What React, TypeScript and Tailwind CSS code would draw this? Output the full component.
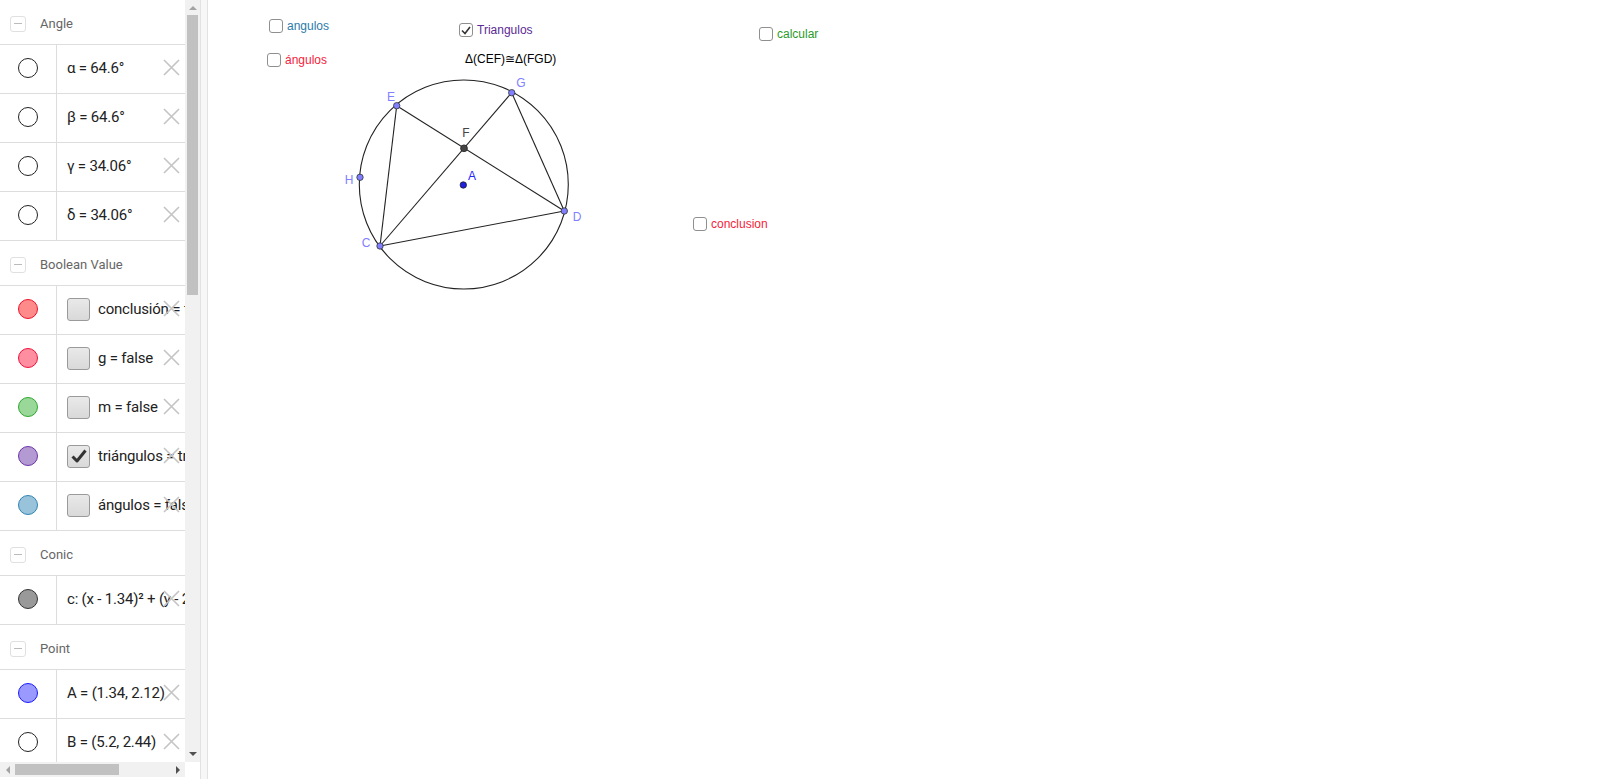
import React from 'react';

type Item = {
	fill: string;
	border: string;
	text: string;
	checkbox?: 'on' | 'off';
};

type Group = { title: string; items: Item[] };

const groups: Group[] = [
	{
		title: 'Angle',
		items: [
			{ fill: 'bg-white', border: 'border-[#222]', text: 'α = 64.6°' },
			{ fill: 'bg-white', border: 'border-[#222]', text: 'β = 64.6°' },
			{ fill: 'bg-white', border: 'border-[#222]', text: 'γ = 34.06°' },
			{ fill: 'bg-white', border: 'border-[#222]', text: 'δ = 34.06°' },
		],
	},
	{
		title: 'Boolean Value',
		items: [
			{ fill: 'bg-[#ff8a8a]', border: 'border-[#f0102a]', text: 'conclusión = false', checkbox: 'off' },
			{ fill: 'bg-[#ff8fa0]', border: 'border-[#f0103a]', text: 'g = false', checkbox: 'off' },
			{ fill: 'bg-[#99d899]', border: 'border-[#2fa82f]', text: 'm = false', checkbox: 'off' },
			{ fill: 'bg-[#b49ad2]', border: 'border-[#6a35a8]', text: 'triángulos = true', checkbox: 'on' },
			{ fill: 'bg-[#99c3da]', border: 'border-[#3184b4]', text: 'ángulos = false', checkbox: 'off' },
		],
	},
	{
		title: 'Conic',
		items: [{ fill: 'bg-[#999999]', border: 'border-[#333]', text: 'c: (x - 1.34)² + (y - 2.12)² = 15.36' }],
	},
	{
		title: 'Point',
		items: [
			{ fill: 'bg-[#9999ff]', border: 'border-[#1a1aff]', text: 'A = (1.34, 2.12)' },
			{ fill: 'bg-white', border: 'border-[#222]', text: 'B = (5.2, 2.44)' },
		],
	},
];

function CloseIcon() {
	return (
		<svg width="17" height="17" viewBox="0 0 17 17" className="absolute left-[163px] top-[14px]">
			<path d="M1 1 L16 16 M16 1 L1 16" stroke="#c4c4c4" strokeWidth="1.6" fill="none" />
		</svg>
	);
}

function ItemRow({ item }: { item: Item }) {
	return (
		<div className="relative flex h-[49px] border-b border-[#dddddd]">
			<div className="flex w-[57px] shrink-0 items-center justify-center border-r border-[#dddddd] pb-[2px]">
				<div className={`h-[20px] w-[20px] rounded-full border ${item.fill} ${item.border}`} />
			</div>
			<div className="flex min-w-0 flex-1 items-center overflow-hidden whitespace-nowrap pb-[2px] pl-[10px] text-[15px] tracking-[-0.2px] text-[#222]">
				{item.checkbox && (
					<div className="mr-[8px] flex h-[23px] w-[23px] shrink-0 items-center justify-center rounded-[3px] border border-[#9a9a9a] bg-gradient-to-b from-[#e9e9e9] to-[#d9d9d9]">
						{item.checkbox === 'on' && (
							<svg width="16" height="14" viewBox="0 0 16 14">
								<path d="M1.5 7.5 L6 12 L14.5 1.5" stroke="#333" strokeWidth="3" fill="none" strokeLinejoin="round" />
							</svg>
						)}
					</div>
				)}
				<span>{item.text}</span>
			</div>
			<CloseIcon />
		</div>
	);
}

function GroupHeader({ title }: { title: string }) {
	return (
		<div className="flex h-[45px] items-center border-b border-[#dddddd] pl-[10px] pt-[3px]">
			<div className="flex h-[16px] w-[16px] items-center justify-center rounded-[3px] border border-[#e0e0e0]">
				<div className="h-px w-[8px] bg-[#bbbbbb]" />
			</div>
			<span className="ml-[14px] text-[13px] text-[#666]">{title}</span>
		</div>
	);
}

function CanvasCheck({
	left,
	top,
	label,
	color,
	checked,
}: {
	left: number;
	top: number;
	label: string;
	color: string;
	checked?: boolean;
}) {
	return (
		<div className="absolute flex items-center gap-[4px]" style={{ left, top }}>
			<div className="flex h-[14px] w-[14px] items-center justify-center rounded-[3px] border-[1.5px] border-[#8f8f8f] bg-white">
				{checked && (
					<svg width="10" height="9" viewBox="0 0 10 9">
						<path d="M1 4.5 L4 7.5 L9 1" stroke="#333" strokeWidth="1.6" fill="none" />
					</svg>
				)}
			</div>
			<span className={`text-[12px] leading-[14px] ${color}`}>{label}</span>
		</div>
	);
}

const pts = {
	E: [396.7, 105.7],
	G: [511.7, 92.7],
	F: [464, 148.3],
	A: [463.3, 185],
	H: [360, 177.3],
	D: [564.3, 211],
	C: [380, 246],
};

function Figure() {
	const { E, G, F, A, H, D, C } = pts;
	const line = (p: number[], q: number[]) => (
		<line x1={p[0]} y1={p[1]} x2={q[0]} y2={q[1]} stroke="#222" strokeWidth="1.1" />
	);
	const labels: [string, number, number, string][] = [
		['E', 391, 101, '#8080ff'],
		['G', 521, 87, '#8080ff'],
		['F', 466, 137, '#444444'],
		['A', 472, 180, '#2424ff'],
		['H', 349, 184, '#8080ff'],
		['D', 577, 221, '#8080ff'],
		['C', 366, 247, '#8080ff'],
	];
	return (
		<svg className="absolute left-0 top-0" width="1408" height="779" viewBox="208 0 1408 779">
			<circle cx="463.8" cy="184.5" r="104.5" fill="none" stroke="#222" strokeWidth="1.1" />
			{line(E, D)}
			{line(C, G)}
			{line(C, E)}
			{line(C, D)}
			{line(G, D)}
			{[E, G, H, D, C].map((p, i) => (
				<circle key={i} cx={p[0]} cy={p[1]} r="3.2" fill="#7f7fff" stroke="#333" strokeWidth="0.8" />
			))}
			<circle cx={F[0]} cy={F[1]} r="3.4" fill="#444" stroke="#222" strokeWidth="0.8" />
			<circle cx={A[0]} cy={A[1]} r="3.2" fill="#2020e0" stroke="#222" strokeWidth="0.8" />
			{labels.map(([t, x, y, c]) => (
				<text key={t} x={x} y={y} fill={c} fontSize="12" textAnchor="middle" fontFamily="'Liberation Sans', Arial, sans-serif">
					{t}
				</text>
			))}
		</svg>
	);
}

export default function App() {
	return (
		<div className="flex h-[779px] w-[1616px] overflow-hidden bg-white font-['Roboto',sans-serif]">
			{/* Algebra view */}
			<div className="flex h-full w-[200px] shrink-0 flex-col">
				<div className="flex h-[762px]">
					<div className="w-[185px] overflow-hidden">
						{groups.map((g) => (
							<div key={g.title}>
								<GroupHeader title={g.title} />
								{g.items.map((it, i) => (
									<ItemRow key={i} item={it} />
								))}
							</div>
						))}
					</div>
					<div className="flex w-[15px] flex-col items-center bg-[#f1f1f1]">
						<div className="flex h-[15px] items-center justify-center">
							<div className="h-0 w-0 border-x-[4px] border-b-[4px] border-x-transparent border-b-[#a3a3a3]" />
						</div>
						<div className="h-[280px] w-[11px] bg-[#c1c1c1]" />
						<div className="flex-1" />
						<div className="flex h-[16px] items-center justify-center">
							<div className="h-0 w-0 border-x-[4px] border-t-[4px] border-x-transparent border-t-[#505050]" />
						</div>
					</div>
				</div>
				<div className="flex h-[15px]">
					<div className="flex w-[185px] items-center bg-[#f1f1f1]">
						<div className="flex w-[15px] justify-center">
							<div className="h-0 w-0 border-y-[4px] border-r-[4px] border-y-transparent border-r-[#a3a3a3]" />
						</div>
						<div className="h-[11px] w-[104px] bg-[#c1c1c1]" />
						<div className="flex-1" />
						<div className="flex w-[15px] justify-center">
							<div className="h-0 w-0 border-y-[4px] border-l-[4px] border-y-transparent border-l-[#505050]" />
						</div>
					</div>
				</div>
			</div>

			{/* Splitter */}
			<div className="w-[8px] shrink-0 border-x border-[#e2e2e2] bg-[#f7f7f7]" />

			{/* Graphics view */}
			<div className="relative flex-1 font-['Liberation_Sans',Arial,sans-serif]">
				<Figure />
				<CanvasCheck left={61} top={19} label="angulos" color="text-[#2b7bab]" />
				<CanvasCheck left={59} top={53} label="ángulos" color="text-[#f5223c]" />
				<CanvasCheck left={251} top={23} label="Triangulos" color="text-[#5b2a95]" checked />
				<CanvasCheck left={551} top={27} label="calcular" color="text-[#2a9a2a]" />
				<CanvasCheck left={485} top={217} label="conclusion" color="text-[#f5223c]" />
				<div className="absolute left-[257px] top-[52px] text-[12px] leading-[14px] text-black">Δ(CEF)≅Δ(FGD)</div>
			</div>
		</div>
	);
}
